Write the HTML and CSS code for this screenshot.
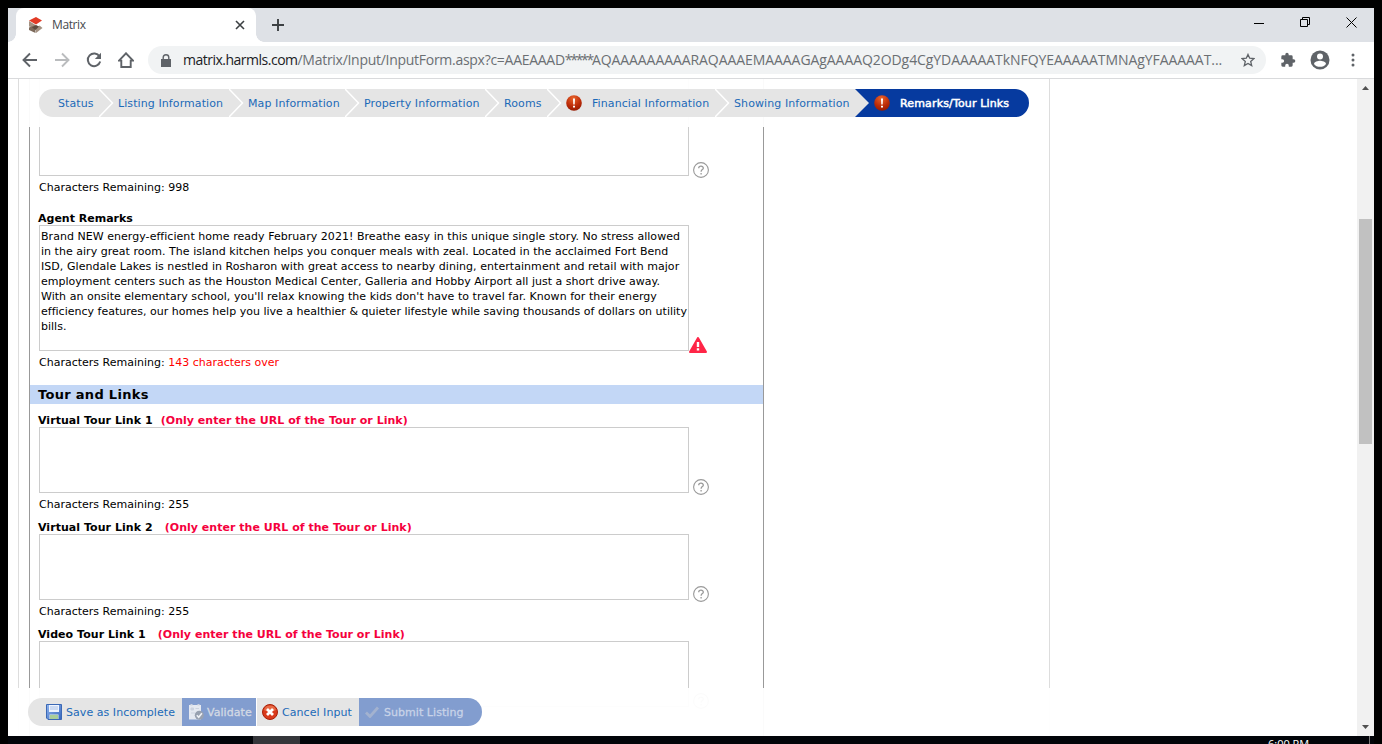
FILE: index.html
```
<!DOCTYPE html>
<html lang="en">
<head>
<meta charset="utf-8">
<title>Matrix</title>
<link rel="stylesheet" href="styles.css">
</head>
<body>
<svg width="0" height="0" class="defs">
  <defs>
    <radialGradient id="red" cx=".45" cy=".2" r=".9"><stop offset="0" stop-color="#e8642c"/><stop offset=".55" stop-color="#bd2c08"/><stop offset="1" stop-color="#8a1500"/></radialGradient>
    <linearGradient id="disk" x1="0" y1="0" x2="1" y2="1"><stop offset="0" stop-color="#8fb4ee"/><stop offset="1" stop-color="#3566bd"/></linearGradient>
    <symbol id="alert" viewBox="0 0 16 16"><circle cx="8" cy="8" r="7.8" fill="url(#red)"/><path d="M7 3.5h2l-.3 6H7.3zM7 10.700h2v1.900H7z" fill="#fff"/></symbol>
    <symbol id="help" viewBox="0 0 16 16"><circle cx="8" cy="8" r="7.400" fill="#fff" stroke="#999" stroke-width="1.100"/><path d="M5.700 6.200C5.800 3.400 10.500 3.600 10.300 6.200C10.200 7.600 8.100 7.700 8.100 9.700M8.100 11v1.400" fill="none" stroke="#999" stroke-width="1.300"/></symbol>
    <symbol id="chev" viewBox="0 0 15 28"><path d="M0 0 13.500 14 0 28" fill="none" stroke="#fff" stroke-width="1.500"/></symbol>
  </defs>
</svg>
<div class="window">
  <div class="tabstrip">
    <div class="tab">
      <svg class="favicon" width="16" height="16" viewBox="0 0 16 16"><path d="M1 3.500 8 0l6 3.500L8 7.500z" fill="#e23b26"/><path d="M1 4l6.500 4v3L1 9.500z" fill="#a39080"/><path d="M1 10.500 7.500 8v8L1 13z" fill="#7d6a5b"/><path d="M8 11l3.500-2.500 3 2.500L8 16z" fill="#a39080"/><path d="M8 8l3 1.500L7.500 13 4 10.500z" fill="#5d4c3f"/></svg>
      <span class="tab-title">Matrix</span>
      <svg width="10" height="10" viewBox="0 0 10 10"><path d="M1 1l8 8M9 1 1 9" stroke="#3c4043" stroke-width="1.600"/></svg>
    </div>
    <svg class="newtab" width="12" height="12" viewBox="0 0 12 12"><path d="M6 0v12M0 6h12" stroke="#3c4043" stroke-width="1.900"/></svg>
    <div class="controls">
      <svg width="11" height="11" viewBox="0 0 11 11"><path d="M0 6.500h10" stroke="#000"/></svg>
      <svg width="11" height="11" viewBox="0 0 11 11"><path d="M.5 2.500h7v7h-7zM2.500 2V.500h7v7H8" fill="none" stroke="#000"/></svg>
      <svg width="11" height="11" viewBox="0 0 11 11"><path d="M.5.5l10 10M10.500.5l-10 10" stroke="#000"/></svg>
    </div>
  </div>
  <div class="toolbar">
    <div class="nav">
      <svg width="16" height="16" viewBox="0 0 16 16"><path d="M15 8H2M8 1.500 1.500 8 8 14.500" fill="none" stroke="#5f6368" stroke-width="1.900"/></svg>
      <svg width="16" height="16" viewBox="0 0 16 16"><path d="M1 8h13M8 1.500 14.500 8 8 14.500" fill="none" stroke="#babcbe" stroke-width="1.900"/></svg>
      <svg width="16" height="16" viewBox="0 0 16 16"><path d="M13.500 4.500A6.300 6.300 0 1 0 14.200 9.500" fill="none" stroke="#5f6368" stroke-width="2"/><path d="M15 .8v6.200H8.800z" fill="#5f6368"/></svg>
      <svg width="16" height="16" viewBox="0 0 16 16"><path d="M1 8.600 8 1.300l7 7.300h-2.300v6.400H3.300V8.600z" fill="none" stroke="#5f6368" stroke-width="1.900"/></svg>
    </div>
    <div class="omnibox">
      <svg width="10" height="13" viewBox="0 0 10 13"><path d="M0 5h10v8H0z" fill="#5f6368"/><path d="M2.200 5.500V3.500a2.800 2.800 0 0 1 5.600 0v2" fill="none" stroke="#5f6368" stroke-width="1.400"/></svg>
      <span class="url"><b>matrix.harmls.com</b>/Matrix/Input/InputForm.aspx?c=AAEAAAD<span class="mask">*****</span><span class="token">AQAAAAAAAAARAQAAAEMAAAAGAgAAAAQ2ODg4CgYDAAAAATkNFQYEAAAAATMNAgYFAAAAAT...</span></span>
      <svg width="14" height="14" viewBox="0 0 14 14"><path d="M7 1.400 8.700 5.200l4.200.4-3.200 2.800 1 4.200L7 10.400l-3.700 2.200 1-4.200L1.100 5.600l4.200-.4z" fill="none" stroke="#5f6368" stroke-width="1.300"/></svg>
    </div>
    <svg class="puzzle" width="16" height="16" viewBox="0 0 24 24"><path d="M20.500 11H19V7a2 2 0 0 0-2-2h-4V3.500a2.500 2.500 0 0 0-5 0V5H4a2 2 0 0 0-2 2v3.800h1.500a2.700 2.700 0 0 1 0 5.400H2V20a2 2 0 0 0 2 2h3.800v-1.500a2.700 2.700 0 0 1 5.400 0V22H17a2 2 0 0 0 2-2v-4h1.500a2.500 2.500 0 0 0 0-5z" fill="#5f6368"/></svg>
    <svg class="person" width="20" height="20" viewBox="0 0 20 20"><circle cx="10" cy="10" r="9.500" fill="#5f6368"/><circle cx="10" cy="6.500" r="3" fill="#fff"/><path d="M4 14c0-2 4-3.200 6-3.200s6 1.200 6 3.200c-2.500 3.800-9.500 3.800-12 0z" fill="#fff"/></svg>
    <svg class="dots" width="4" height="14" viewBox="0 0 4 14"><circle cx="2" cy="2" r="1.500" fill="#5f6368"/><circle cx="2" cy="7" r="1.500" fill="#5f6368"/><circle cx="2" cy="12" r="1.500" fill="#5f6368"/></svg>
  </div>
  <div class="viewport">
    <div class="page">
      <div class="sheet">
        <div class="form">
          <div class="row"><div class="box box-cut"></div><svg class="help"><use href="#help"/></svg></div>
          <div class="count count-tall">Characters Remaining: 998</div>
          <div class="label label-agent">Agent Remarks</div>
          <div class="row">
            <div class="box box-text">
              <div class="l1">Brand NEW energy-efficient home ready February 2021! Breathe easy in this unique single story. No stress allowed</div>
              <div class="l2">in the airy great room. The island kitchen helps you conquer meals with zeal. Located in the acclaimed Fort Bend</div>
              <div class="l3">ISD, Glendale Lakes is nestled in Rosharon with great access to nearby dining, entertainment and retail with major</div>
              <div class="l4">employment centers such as the Houston Medical Center, Galleria and Hobby Airport all just a short drive away.</div>
              <div class="l5">With an onsite elementary school, you'll relax knowing the kids don't have to travel far. Known for their energy</div>
              <div class="l6">efficiency features, our homes help you live a healthier &amp; quieter lifestyle while saving thousands of dollars on utility</div>
              <div class="l7">bills.</div>
            </div>
            <svg class="warn" viewBox="0 0 18 16"><path d="M9 1 17 15H1z" fill="#ff2547" stroke="#ff2547" stroke-width="2" stroke-linejoin="round"/><path d="M7.800 5h2.400v5H7.800zM7.800 11.200h2.400v2.300H7.800z" fill="#fff"/></svg>
          </div>
          <div class="count count-tall">Characters Remaining: <span class="over">143 characters over</span></div>
          <div class="section"><span>Tour and Links</span></div>
          <div class="label"><span>Virtual Tour Link 1</span><em class="g1">(Only enter the URL of the Tour or Link)</em></div>
          <div class="row"><div class="box"></div><svg class="help"><use href="#help"/></svg></div>
          <div class="count">Characters Remaining: 255</div>
          <div class="label"><span>Virtual Tour Link 2</span><em class="g2">(Only enter the URL of the Tour or Link)</em></div>
          <div class="row"><div class="box"></div><svg class="help"><use href="#help"/></svg></div>
          <div class="count">Characters Remaining: 255</div>
          <div class="label"><span>Video Tour Link 1</span><em class="g3">(Only enter the URL of the Tour or Link)</em></div>
          <div class="row"><div class="box"></div><svg class="help"><use href="#help"/></svg></div>
        </div>
      </div>
      <div class="steps">
        <div class="step s1"><span>Status</span></div>
        <div class="step s2"><svg class="chev"><use href="#chev"/></svg><span>Listing Information</span></div>
        <div class="step s3"><svg class="chev"><use href="#chev"/></svg><span>Map Information</span></div>
        <div class="step s4"><svg class="chev"><use href="#chev"/></svg><span>Property Information</span></div>
        <div class="step s5"><svg class="chev"><use href="#chev"/></svg><span>Rooms</span></div>
        <div class="step s6"><svg class="chev"><use href="#chev"/></svg><svg class="alert"><use href="#alert"/></svg><span>Financial Information</span></div>
        <div class="step s7"><svg class="chev"><use href="#chev"/></svg><span>Showing Information</span></div>
        <div class="step s8"><svg class="chev" viewBox="0 0 15 28"><path d="M0 0 14 14 0 28z" fill="#e5e5e5"/></svg><svg class="alert"><use href="#alert"/></svg><span>Remarks/Tour Links</span></div>
      </div>
      <div class="footer">
        <div class="actions">
          <div class="btn save"><svg width="16" height="16" viewBox="0 0 16 16"><path d="M.5.500h15v15H2L.5 14z" fill="url(#disk)" stroke="#3b68b5"/><path d="M3 1h10v7H3z" fill="#eef4ff"/><path d="M4 3h8M4 5h8" stroke="#a9c0e6"/><path d="M3.500 10.500h9V15h-9z" fill="#e9f3e4"/><path d="M4 12h8M4 14h8" stroke="#6aa84f"/></svg><span>Save as Incomplete</span></div>
          <div class="btn validate"><svg width="16" height="16" viewBox="0 0 16 16"><path d="M1 1h12v14.500H1z" fill="#e5e9f1"/><path d="M2.500 0h2v1.500h-2zM9.500 0h2v1.500h-2z" fill="#cbd2df"/><path d="M3 4h2.500v2H3zM7.500 4.500h3.500M3 9h4" stroke="#ccd3df" fill="#ccd3df"/><circle cx="11.300" cy="11.300" r="4.500" fill="#98a1b0"/><path d="M8.800 11.300l1.900 2 3.200-4" fill="none" stroke="#eef1f6" stroke-width="1.600"/></svg><span>Validate</span></div>
          <div class="btn cancel"><svg width="16" height="16" viewBox="0 0 16 16"><circle cx="8" cy="8" r="7.500" fill="#d93a1c" stroke="#a82008"/><path d="M2 6a6.300 6.300 0 0 1 12 0C10 8 5 8 2 6z" fill="#f08a62" opacity=".6"/><path d="M5 5l6 6M11 5l-6 6" stroke="#fff" stroke-width="2.800"/></svg><span>Cancel Input</span></div>
          <div class="btn submit"><svg width="14" height="12" viewBox="0 0 14 12"><path d="M1 6.500 5 10.500 13 1.500" fill="none" stroke="#a3b2cf" stroke-width="2.800"/></svg><span>Submit Listing</span></div>
        </div>
      </div>
    </div>
    <div class="scrollbar">
      <svg width="7" height="4" viewBox="0 0 7 4"><path d="M0 4 3.500 0 7 4z" fill="#505050"/></svg>
      <div class="thumb"></div>
      <svg width="7" height="4" viewBox="0 0 7 4"><path d="M0 0h7L3.500 4z" fill="#505050"/></svg>
    </div>
  </div>
</div>
<div class="taskbar"><div class="task"></div><div class="clock">6:00 PM</div><div class="peek"></div></div>
</body>
</html>
```
FILE: styles.css
```
* { box-sizing: border-box; }
body { margin: 0; width: 1382px; height: 744px; overflow: hidden; background: #000; padding: 8px 8px 0; font: 11px/15px Verdana, "DejaVu Sans", sans-serif; color: #000; }
svg { display: block; flex: none; }
.defs { position: absolute; }
.window { height: 728px; background: #fff; display: flex; flex-direction: column; }
.tabstrip { height: 34px; flex: none; background: #dee1e6; display: flex; align-items: center; padding-left: 8px; }
.tab { position: relative; width: 240px; height: 34px; background: #fff; border-radius: 8px 8px 0 0; display: flex; align-items: center; padding: 0 11px 0 12px; }
.tab::before, .tab::after { content: ""; position: absolute; bottom: 0; width: 8px; height: 8px; }
.tab::before { left: -8px; background: radial-gradient(circle at 0 0, #dee1e6 7.5px, #fff 8px); }
.tab::after { right: -8px; background: radial-gradient(circle at 100% 0, #dee1e6 7.5px, #fff 8px); }
.tab-title { flex: 1; margin-left: 8px; font: 12px/16px "Open Sans", sans-serif; letter-spacing: -.4px; color: #45494d; }
.newtab { margin-left: 16px; }
.controls { margin-left: auto; display: flex; gap: 35px; padding: 0 17px 6px 0; }
.toolbar { height: 37px; flex: none; border-bottom: 1px solid #d9dadc; display: flex; align-items: center; }
.nav { display: flex; gap: 16px; padding-left: 14px; }
.omnibox { width: 1118px; height: 28px; margin-left: 14px; border-radius: 14px; background: #f1f3f4; display: flex; align-items: center; padding: 0 11px 0 13px; }
.url { flex: 1; min-width: 0; margin-left: 12px; white-space: nowrap; font: 14px/20px "Open Sans", sans-serif; letter-spacing: -.28px; color: #6b6f73; }
.url b { font-weight: 400; letter-spacing: -.5px; color: #202124; }
.mask { letter-spacing: -2.3px; }
.token { letter-spacing: -.07px; }
.puzzle { margin-left: 14px; }
.person { margin-left: 14px; }
.dots { margin-left: 21px; }
.viewport { flex: 1; display: flex; min-height: 0; }
.page { position: relative; width: 1349px; overflow: hidden; }
.sheet { height: 657px; margin-left: 10px; width: 1032px; border: solid #ddd; border-width: 0 1px; padding-left: 10px; }
.form { width: 735px; height: 657px; border: solid #999; border-width: 0 1px; overflow: hidden; }
.row { display: flex; align-items: flex-end; padding-left: 9px; }
.box { width: 650px; height: 66px; border: 1px solid #ccc; background: #fff; }
.box-cut { height: 97px; border-top: 0; }
.box-text { height: 126px; padding: 3px 0 0 1px; white-space: nowrap; }
.l1 { letter-spacing: .042px; }
.l2 { letter-spacing: .027px; }
.l3 { letter-spacing: .052px; }
.l4 { letter-spacing: .012px; }
.l5 { letter-spacing: .038px; }
.l6 { letter-spacing: .01px; }
.help { width: 16px; height: 16px; margin: 0 0 -2px 4px; }
.warn { width: 18px; height: 16px; margin: 0 0 -2px 0; }
.count { height: 26px; padding: 4px 0 0 9px; white-space: nowrap; }
.count-tall { height: 34px; }
.over { color: #f00; }
.label { height: 15px; padding-left: 8px; display: flex; font-weight: 700; line-height: 17px; letter-spacing: .05px; white-space: nowrap; }
.label-agent { letter-spacing: 0; }
.label em { font-style: normal; letter-spacing: .03px; color: #f5003d; }
.g1 { margin-left: 8px; } .g2 { margin-left: 12px; } .g3 { margin-left: 12px; }
.section { height: 19px; margin-bottom: 8px; padding-left: 8px; background: #c3d7f6; font-weight: 700; font-size: 13px; line-height: 19px; letter-spacing: .3px; }
.steps { position: absolute; top: 0; left: 11px; width: 1030px; height: 48px; padding: 10px 0 10px 20px; display: flex; background: rgba(255,255,255,.95); }
.step { position: relative; height: 28px; background: #e5e5e5; color: #1c6ab8; display: flex; align-items: center; padding-left: 19px; letter-spacing: .09px; white-space: nowrap; }
.chev { position: absolute; left: 0; top: 0; width: 15px; height: 28px; }
.alert { width: 16px; height: 16px; margin-right: 10px; }
.s1 { width: 60px; border-radius: 14px 0 0 14px; }
.s2 { width: 130px; }
.s3 { width: 116px; }
.s4 { width: 140px; }
.s5 { width: 62px; }
.s6 { width: 168px; }
.s7 { width: 140px; }
.s8 { width: 174px; border-radius: 0 14px 14px 0; background: #063a9f; color: #fff; letter-spacing: .15px; -webkit-text-stroke: .5px #fff; }
.footer { position: absolute; left: 0; top: 609px; width: 1349px; height: 48px; padding: 10px 0 0 20px; background: rgba(255,255,255,.96); }
.actions { display: flex; }
.btn { height: 28px; display: flex; align-items: center; background: #e5e5e5; color: #1c6ab8; letter-spacing: .05px; white-space: nowrap; }
.btn span { margin-left: 4px; }
.save { width: 154px; padding-left: 18px; border-radius: 14px 0 0 14px; }
.validate { width: 74px; padding-left: 6px; background: #829dcf; color: #d3d9e4; -webkit-text-stroke: .3px #d3d9e4; }
.validate span { margin-left: 3px; }
.cancel { width: 102px; margin-left: 1px; padding-left: 5px; }
.submit { width: 123px; padding-left: 6px; background: #829dcf; color: #c8d3e8; border-radius: 0 14px 14px 0; -webkit-text-stroke: .3px #c8d3e8; }
.submit span { margin-left: 5px; }
.scrollbar { width: 17px; background: #f1f1f1; display: flex; flex-direction: column; align-items: center; padding: 7px 0; }
.thumb { width: 13px; height: 225px; margin: 129px 0 auto; background: #c1c1c1; }
.taskbar { height: 8px; overflow: hidden; display: flex; background: #020409; }
.task { width: 47px; height: 8px; margin-left: 245px; background: #35363a; }
.clock { margin-left: 968px; color: #fff; font: 11px/14px "Open Sans", sans-serif; padding-top: 1px; }
.peek { width: 1px; height: 8px; margin-left: 60px; background: #777; }
```
